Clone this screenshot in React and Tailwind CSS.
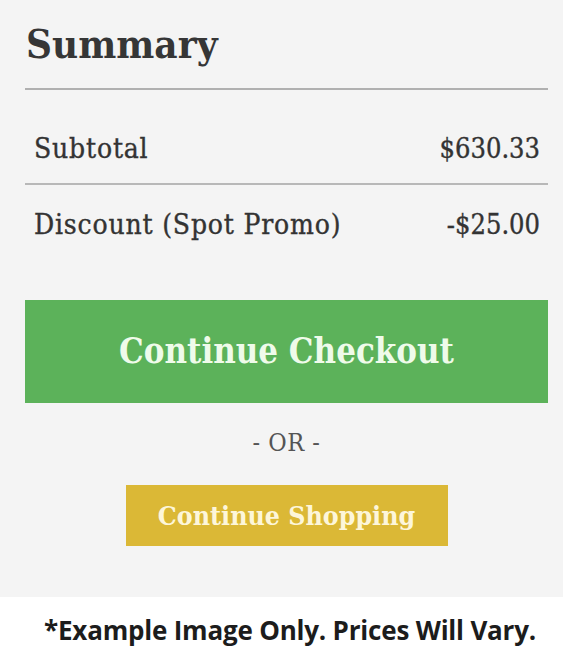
import React from 'react';

const slab = { fontFamily: '"DejaVu Serif Condensed", "DejaVu Serif", serif' };

const Row = ({ label, value, className }) => (
  <div className={`flex items-center justify-between pl-[9px] pr-[8px] text-[#333] [-webkit-text-stroke:0.35px_#333] ${className}`}>
    <span className="text-[28px] leading-[28px] tracking-[0.8px] font-stretch-condensed" style={slab}>{label}</span>
    <span className="text-[27px] leading-[28px] font-stretch-condensed" style={slab}>{value}</span>
  </div>
);

export default function App() {
  return (
    <div className="w-[566px] h-[666px] bg-white">
      <div className="w-[563px] h-[597px] bg-[#f4f4f4] pl-[25px] pr-[15px] pt-[23px]">
        <h1
          className="text-[40px] leading-[42px] font-bold text-[#363636] pl-[1px] font-stretch-condensed"
          style={slab}
        >
          Summary
        </h1>
        <div className="mt-[23px] border-b-2 border-[#b0b0b0]" />
        <Row label="Subtotal" value="$630.33" className="pt-[45px] pb-[20px]" />
        <div className="border-b-2 border-[#b8b8b8]" />
        <Row label="Discount (Spot Promo)" value="-$25.00" className="pt-[26px]" />
        <button
          className="mt-[61px] w-full h-[103px] bg-[#5cb25a] text-[#effbea] text-[34.5px] font-bold font-stretch-condensed"
          style={slab}
        >
          Continue Checkout
        </button>
        <div
          className="mt-[28px] text-center text-[25px] leading-[24px] tracking-[0.5px] text-[#555] font-stretch-condensed"
          style={slab}
        >
          - OR -
        </div>
        <div className="flex justify-center">
          <button
            className="mt-[30px] w-[322px] h-[61px] bg-[#dbb836] text-[#fdf6da] text-[26.5px] font-bold font-stretch-condensed"
            style={slab}
          >
            Continue Shopping
          </button>
        </div>
      </div>
      <div
        className="pt-[18px] pl-[14px] text-center text-[26px] leading-[30px] font-bold text-[#1c1c1c] tracking-[-0.2px]"
        style={{ fontFamily: '"Open Sans", sans-serif' }}
      >
        *Example Image Only. Prices Will Vary.
      </div>
    </div>
  );
}
